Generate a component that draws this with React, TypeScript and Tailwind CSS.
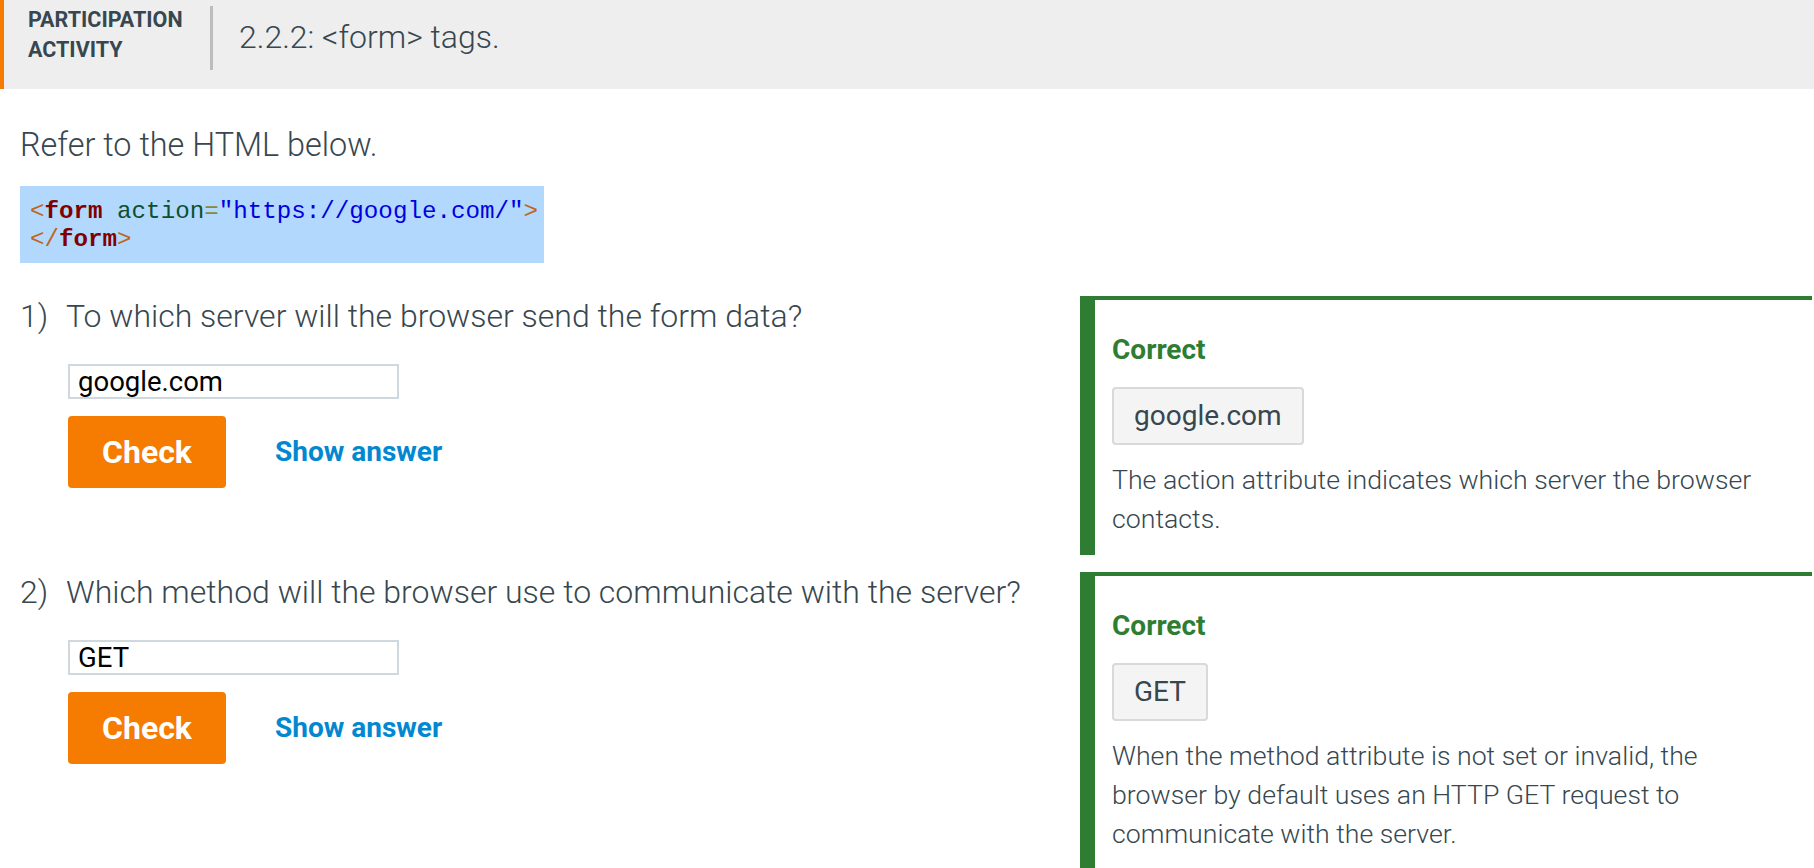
import React from "react";

function Question({
  num,
  text,
  value,
}: {
  num: string;
  text: string;
  value: string;
}) {
  return (
    <div className="w-[1060px] shrink-0">
      <div className="flex text-[32px] font-light leading-[40px]">
        <span className="w-[46px] shrink-0">{num}</span>
        <span>{text}</span>
      </div>
      <div className="ml-[48px] mt-[28px] flex h-[35px] w-[331px] items-center border-2 border-[#cfd8dc] bg-white pl-[8px] text-[27.5px] leading-none text-black">
        {value}
      </div>
      <div className="ml-[48px] mt-[17px] flex items-center">
        <button className="flex h-[72px] w-[158px] items-center justify-center rounded-[4px] bg-[#f57c00] text-[32px] font-bold text-white">
          Check
        </button>
        <span className="ml-[49px] text-[28px] font-bold text-[#0288d1]">
          Show answer
        </span>
      </div>
    </div>
  );
}

function Feedback({ answer, lines }: { answer: string; lines: string }) {
  return (
    <div className="flex-1 border-l-[15px] border-t-4 border-[#2e7d32] bg-white pl-[17px] pr-[20px] pt-[32px] pb-[16px]">
      <div className="text-[28px] font-bold leading-[36px] text-[#2e7d32]">
        Correct
      </div>
      <div className="mt-[19px] inline-flex h-[58px] items-center rounded-[4px] border-2 border-[#d9d9d9] bg-[#f4f4f4] px-[20px] text-[28px] text-[#37474f]">
        {answer}
      </div>
      <p className="mt-[16px] text-[26.7px] font-light leading-[39px]">{lines}</p>
    </div>
  );
}

export default function App() {
  return (
    <div className="min-h-screen bg-white font-['Roboto','Liberation_Sans',sans-serif] text-[#37474f]">
      <header className="flex h-[89px] items-start border-l-4 border-[#f57c00] bg-[#eeeeee]">
        <div className="w-[206px] shrink-0 pl-[24px] pt-[5px] text-[21.5px] font-bold leading-[30px]">
          PARTICIPATION
          <br />
          ACTIVITY
        </div>
        <div className="mt-[6px] h-[64px] w-[3px] shrink-0 bg-[#bdbdbd]" />
        <div className="ml-[26px] mt-[21px] text-[32px] font-light leading-[32px]">
          2.2.2: &lt;form&gt; tags.
        </div>
      </header>

      <main className="pl-[20px] pr-[2px]">
        <p className="mt-[36px] text-[32.4px] font-light leading-[40px]">
          Refer to the HTML below.
        </p>
        <pre className="mt-[21px] h-[77px] w-[524px] bg-[#b3d8fd] pl-[10px] pt-[12px] font-['Liberation_Mono',monospace] text-[24.2px] leading-[28px]">
          <span className="text-[#c0651b]">&lt;</span>
          <span className="font-bold text-[#800000]">form</span>{" "}
          <span className="text-[#0b5130]">action</span>
          <span className="text-[#8c8a2a]">=</span>
          <span className="text-[#0000e0]">"https://google.com/"</span>
          <span className="text-[#c0651b]">&gt;</span>
          {"\n"}
          <span className="text-[#c0651b]">&lt;/</span>
          <span className="font-bold text-[#800000]">form</span>
          <span className="text-[#c0651b]">&gt;</span>
        </pre>

        <div className="mt-[33px] flex">
          <Question
            num="1)"
            text="To which server will the browser send the form data?"
            value="google.com"
          />
          <Feedback
            answer="google.com"
            lines="The action attribute indicates which server the browser contacts."
          />
        </div>

        <div className="mt-[17px] flex">
          <Question
            num="2)"
            text="Which method will the browser use to communicate with the server?"
            value="GET"
          />
          <Feedback
            answer="GET"
            lines="When the method attribute is not set or invalid, the browser by default uses an HTTP GET request to communicate with the server."
          />
        </div>
      </main>
    </div>
  );
}
